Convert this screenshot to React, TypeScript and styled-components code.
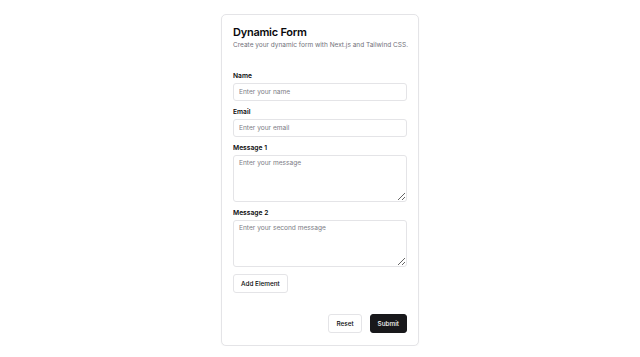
import React from "react";
import styled, { createGlobalStyle } from "styled-components";

const Global = createGlobalStyle`
  * { box-sizing: border-box; }
  html, body { margin: 0; padding: 0; background: #ffffff; }
  body { font-family: Inter, "Noto Sans", sans-serif; color: #09090b; }
`;

const Page = styled.div`
  display: flex;
  justify-content: center;
  padding-top: 14px;
`;

const Card = styled.div`
  width: 198px;
  border: 1px solid #e4e4e7;
  border-radius: 5px;
  background: #fff;
  box-shadow: 0 1px 2px rgba(0, 0, 0, 0.04);
  padding: 11px 11px 12px;
  display: flex;
  flex-direction: column;
`;

const Header = styled.div`
  display: flex;
  flex-direction: column;
  gap: 1px;
  margin-bottom: 23px;
`;

const Title = styled.h1`
  margin: 0;
  font-size: 11px;
  line-height: 13px;
  font-weight: 600;
  letter-spacing: -0.25px;
`;

const Desc = styled.p`
  margin: 0;
  font-size: 6.5px;
  line-height: 10px;
  color: #71717a;
  white-space: nowrap;
`;

const Form = styled.form`
  display: flex;
  flex-direction: column;
  gap: 8px;
`;

const Field = styled.div`
  display: flex;
  flex-direction: column;
  gap: 3px;
`;

const Label = styled.label`
  font-size: 6.7px;
  line-height: 7px;
  font-weight: 600;
`;

const Input = styled.input`
  height: 18px;
  width: 100%;
  border: 1px solid #e4e4e7;
  border-radius: 3px;
  padding: 0 5px;
  font-family: inherit;
  font-size: 6.6px;
  color: #09090b;
  outline: none;
  &::placeholder { color: #7c7c85; }
`;

const Area = styled.textarea`
  height: 47px;
  width: 100%;
  border: 1px solid #e4e4e7;
  border-radius: 3px;
  padding: 3px 5px;
  font-family: inherit;
  font-size: 6.6px;
  color: #09090b;
  outline: none;
  display: block;
  &::placeholder { color: #7c7c85; }
`;

const Button = styled.button<{ $primary?: boolean }>`
  height: 19px;
  padding: 0 7px;
  border-radius: 3px;
  font-family: inherit;
  font-size: 6.4px;
  font-weight: 500;
  cursor: pointer;
  border: 1px solid ${(p) => (p.$primary ? "#18181b" : "#e4e4e7")};
  background: ${(p) => (p.$primary ? "#18181b" : "#ffffff")};
  color: ${(p) => (p.$primary ? "#fafafa" : "#09090b")};
`;

const AddRow = styled.div`
  display: flex;
  margin-top: -1px;
`;

const Footer = styled.div`
  display: flex;
  justify-content: flex-end;
  gap: 8px;
  margin-top: 21px;
`;

export default function App() {
  return (
    <>
      <Global />
      <Page>
        <Card>
          <Header>
            <Title>Dynamic Form</Title>
            <Desc>Create your dynamic form with Next.js and Tailwind CSS.</Desc>
          </Header>
          <Form onSubmit={(e) => e.preventDefault()}>
            <Field>
              <Label>Name</Label>
              <Input placeholder="Enter your name" />
            </Field>
            <Field>
              <Label>Email</Label>
              <Input placeholder="Enter your email" />
            </Field>
            <Field>
              <Label>Message 1</Label>
              <Area placeholder="Enter your message" />
            </Field>
            <Field>
              <Label>Message 2</Label>
              <Area placeholder="Enter your second message" />
            </Field>
            <AddRow>
              <Button type="button">Add Element</Button>
            </AddRow>
          </Form>
          <Footer>
            <Button type="button">Reset</Button>
            <Button type="submit" $primary>
              Submit
            </Button>
          </Footer>
        </Card>
      </Page>
    </>
  );
}
